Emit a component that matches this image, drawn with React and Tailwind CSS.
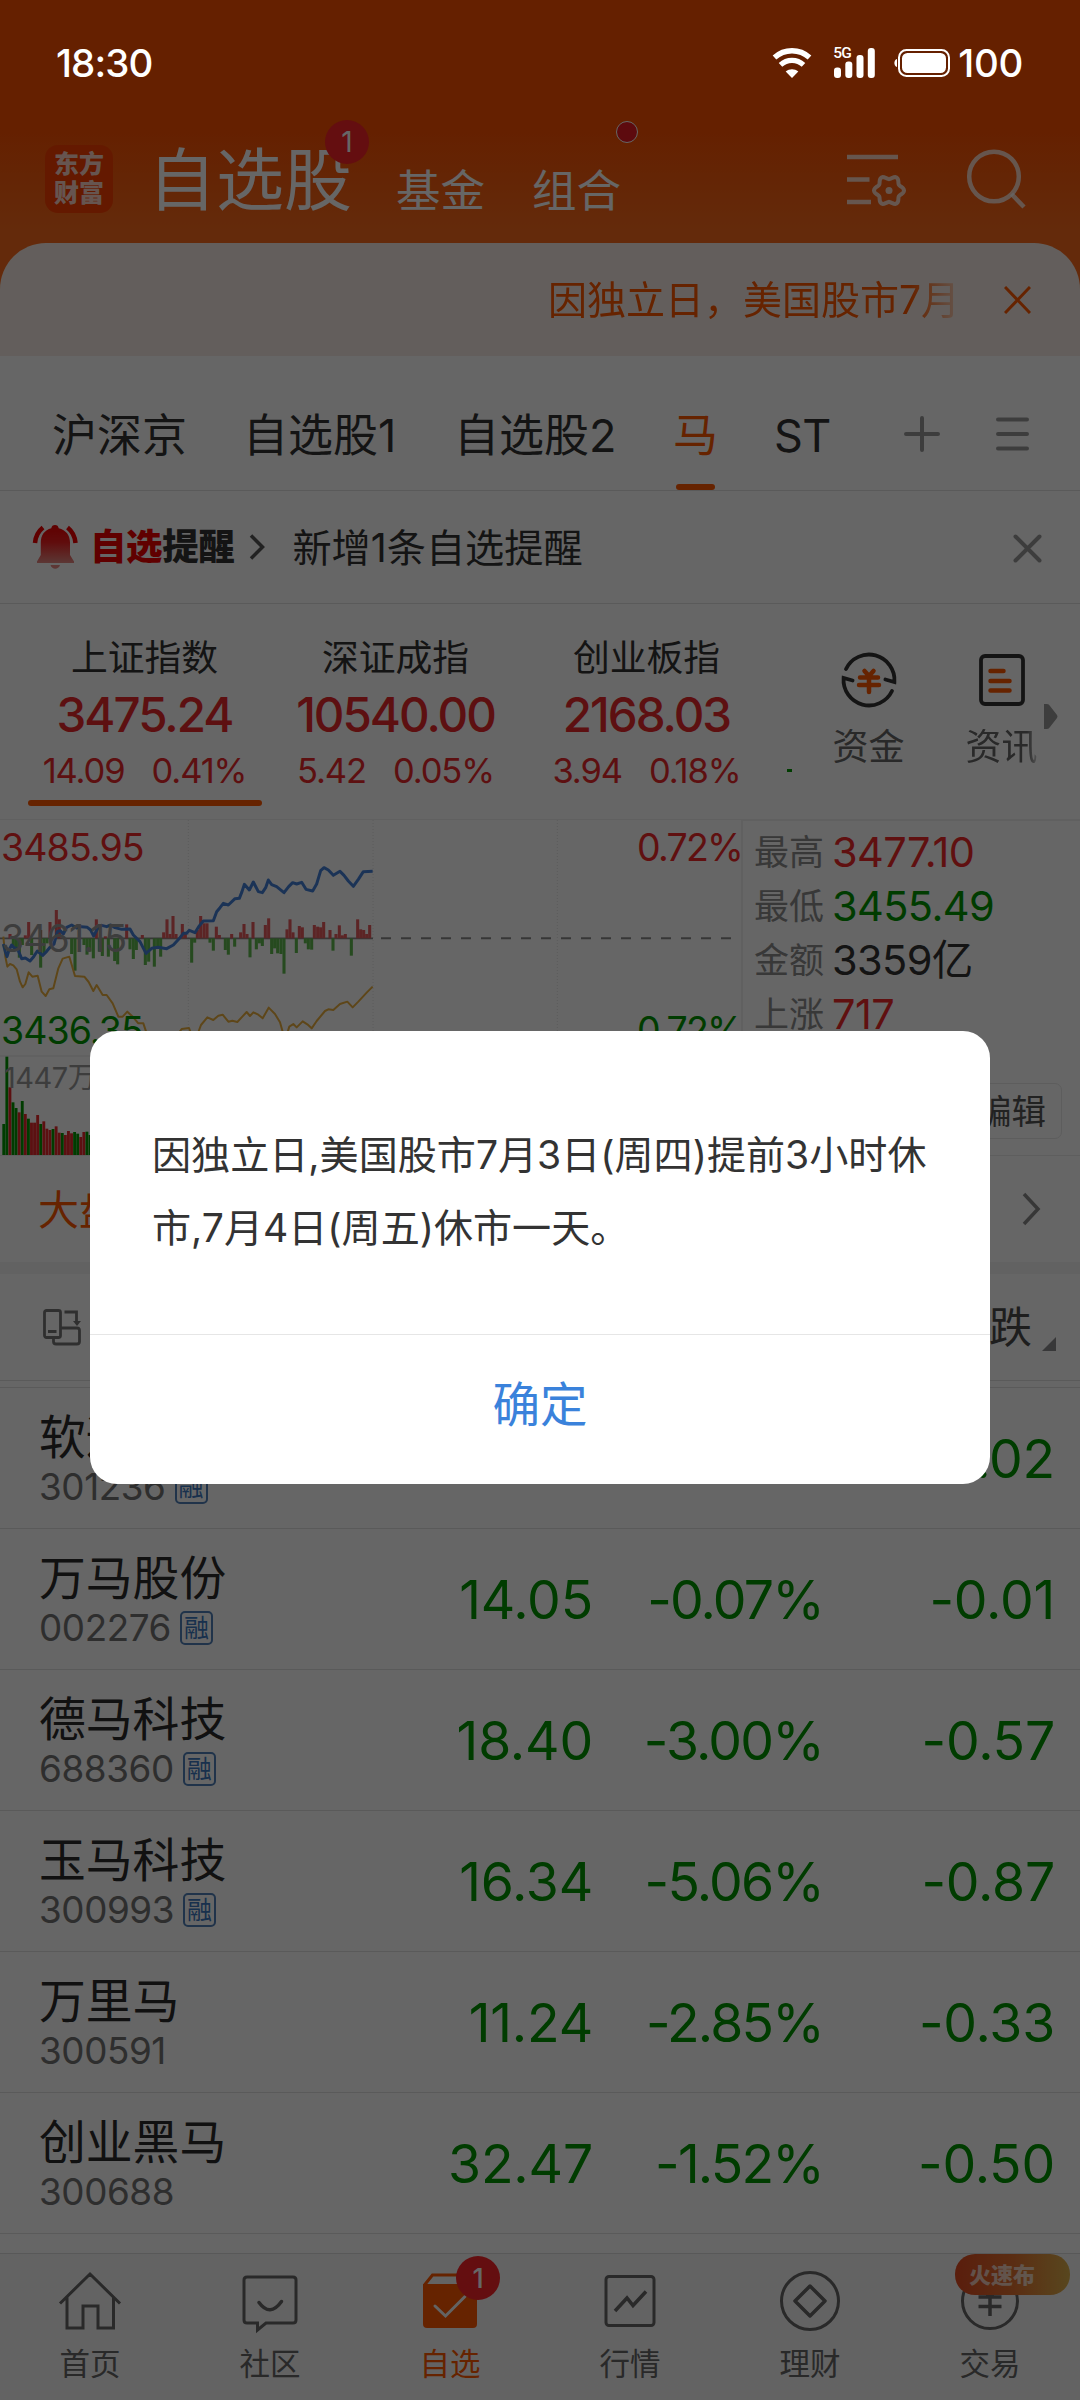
import React from "react";

const stocks = [
  { name: "软通动力", code: "301236", margin: true, price: "54.59", pct: "-0.04%", diff: "-0.02" },
  { name: "万马股份", code: "002276", margin: true, price: "14.05", pct: "-0.07%", diff: "-0.01" },
  { name: "德马科技", code: "688360", margin: true, price: "18.40", pct: "-3.00%", diff: "-0.57" },
  { name: "玉马科技", code: "300993", margin: true, price: "16.34", pct: "-5.06%", diff: "-0.87" },
  { name: "万里马", code: "300591", margin: false, price: "11.24", pct: "-2.85%", diff: "-0.33" },
  { name: "创业黑马", code: "300688", margin: false, price: "32.47", pct: "-1.52%", diff: "-0.50" },
];

const indexes = [
  { name: "上证指数", value: "3475.24", diff: "14.09", pct: "0.41%", active: true },
  { name: "深证成指", value: "10540.00", diff: "5.42", pct: "0.05%" },
  { name: "创业板指", value: "2168.03", diff: "3.94", pct: "0.18%" },
];

const stats = [
  { label: "最高", value: "3477.10", color: "text-[#f02a2a]" },
  { label: "最低", value: "3455.49", color: "text-[#009600]" },
  { label: "金额", value: "3359亿", color: "text-[#333333]" },
  { label: "上涨", value: "717", color: "text-[#f02a2a]" },
];

// chart data, [x, y] in chart units (3 units = 1px), zero line at y = 385
const priceLine =
  "10,402 16,425 21,440 27,420 35,405 44,415 52,415 65,446 76,444 90,453 101,440 112,423 128,436 140,424 150,412 162,402 172,365 181,362 190,372 200,352 215,345 230,354 244,350 262,352 272,360 281,378 295,352 305,346 320,350 332,345 345,353 365,358 390,357 400,375 420,395 438,430 455,415 475,412 500,416 520,405 540,383 550,370 560,370 568,361 585,368 596,350 610,333 640,332 650,305 660,293 670,280 685,285 705,266 718,265 726,245 733,223 748,240 760,216 775,245 787,248 797,233 805,210 815,224 830,230 840,238 852,248 866,230 878,218 890,222 905,217 918,238 938,243 950,222 962,182 972,173 985,180 1000,196 1020,184 1032,196 1045,213 1060,229 1075,208 1090,185 1118,184";
const avgLine =
  "10,380 16,440 22,470 30,462 40,466 50,478 60,515 68,532 76,522 86,487 97,500 113,497 125,545 137,558 148,538 160,535 175,475 188,446 208,440 225,498 253,500 266,516 280,543 290,525 308,555 320,555 338,580 355,620 368,620 382,605 400,622 415,640 430,640 440,670 470,700 520,690 545,657 567,654 577,680 590,680 603,645 622,622 640,630 655,617 668,614 685,635 697,632 712,636 727,620 740,606 750,618 760,607 775,614 788,625 806,593 825,612 840,637 855,690 868,650 880,642 890,652 908,634 922,643 935,655 950,633 975,603 985,598 1000,600 1020,582 1042,575 1058,592 1075,575 1100,548 1118,530";
const upBars = [
  [30, 372], [76, 376], [86, 336], [122, 360], [150, 336], [169, 300], [178, 328], [289, 328], [316, 379], [380, 343],
  [427, 375], [491, 367], [501, 328], [510, 372], [519, 318], [528, 372], [547, 342], [556, 372], [592, 360], [602, 318], [612, 340],
  [621, 340], [649, 350], [658, 375], [695, 372], [722, 367], [732, 342], [741, 372], [759, 336], [796, 345],
  [806, 325], [861, 358], [870, 328], [879, 367], [898, 348], [907, 352], [943, 345], [953, 350], [962, 352],
  [971, 336], [990, 360], [1008, 372], [1018, 346], [1027, 376], [1036, 372], [1073, 328], [1082, 358], [1091, 360], [1100, 372], [1109, 345],
];
const downBars = [
  [40, 415], [49, 420], [58, 443], [67, 405], [95, 435], [122, 473], [132, 430], [141, 400], [215, 432], [225, 482], [252, 405],
  [261, 434], [270, 425], [280, 445], [298, 425], [307, 438], [325, 440], [344, 453], [353, 463], [390, 418], [400, 447],
  [409, 420], [436, 465], [446, 455], [463, 470], [473, 415], [482, 440], [575, 458], [584, 398], [630, 398], [640, 422], [676, 420],
  [685, 434], [704, 410], [750, 442], [769, 418], [778, 400], [787, 408], [815, 432], [824, 415], [833, 430],
  [843, 432], [852, 491], [889, 429], [916, 400], [925, 418], [935, 419], [999, 422], [1054, 437],
];
const volumes = [
  ["g", 942], ["g", 740], ["r", 832], ["g", 877], ["g", 894], ["r", 907], ["g", 873], ["r", 912], ["g", 926], ["r", 938],
  ["r", 938], ["r", 915], ["g", 942], ["r", 934], ["r", 956], ["r", 960], ["g", 957], ["r", 949], ["r", 968], ["g", 969],
  ["r", 975], ["r", 963], ["r", 970], ["g", 966], ["g", 971], ["r", 981], ["r", 966], ["g", 965], ["g", 975], ["r", 970],
];

function gearPath(cx, cy, r, amp) {
  let d = "";
  for (let i = 0; i <= 72; i++) {
    const a = (i / 72) * Math.PI * 2;
    const rr = r + amp * Math.cos(6 * a);
    d += `${i ? "L" : "M"}${(cx + rr * Math.cos(a)).toFixed(2)} ${(cy + rr * Math.sin(a)).toFixed(2)}`;
  }
  return d + "Z";
}

function StatusBar() {
  return (
    <div className="relative z-20 h-[126px] flex items-center justify-between pl-[56px] pr-[57px] text-white font-medium text-[38.5px] leading-none">
      <span className="tracking-[-0.9px]">18:30</span>
      <div className="flex items-center">
        <svg width="40" height="32" viewBox="0 0 40 32" fill="none" stroke="#fff">
          <path d="M2.500 10.500C12.500 1.500 27.500 1.500 37.500 10.500" strokeWidth="5.500" />
          <path d="M8.500 17.800C15 11.800 25 11.800 31.500 17.800" strokeWidth="5.200" />
          <path d="M20 31l-6.300-6.500c3.800-3 8.800-3 12.600 0z" fill="#fff" stroke="none" />
        </svg>
        <div className="relative ml-[22px] w-[42px] h-[32px]">
          <span className="absolute left-[-1px] top-0 text-[15.5px] leading-[13px] font-medium tracking-[-0.8px] font-['Roboto']">5G</span>
          <svg width="42" height="32" viewBox="0 0 42 32" fill="#fff">
            <rect x="0" y="20.500" width="7" height="10.500" rx="3" />
            <rect x="11.300" y="14.500" width="7" height="16.500" rx="3" />
            <rect x="22.500" y="8" width="7" height="23" rx="3" />
            <rect x="33.800" y="1" width="7" height="30" rx="3" />
          </svg>
        </div>
        <svg className="ml-[18px]" width="56" height="30" viewBox="0 0 56 30" fill="none">
          <rect x="5" y="2" width="50" height="26" rx="7.500" stroke="#fff" strokeWidth="2" />
          <rect x="8" y="5" width="44" height="20" rx="5.500" fill="#fff" />
          <path d="M3 11v8C-.5 18-.5 12 3 11z" fill="#fff" />
        </svg>
        <span className="ml-[8px] tracking-[-0.3px]">100</span>
      </div>
    </div>
  );
}

function Header() {
  return (
    <div className="flex h-[117px] pl-[45px] text-white">
      <div className="mt-[19px] w-[68px] h-[68px] rounded-[13px] bg-[#fb4000] flex flex-col items-center justify-center text-[25px] leading-[29px] font-black text-[#ffffffcc]">
        <span>东方</span>
        <span>财富</span>
      </div>
      <div className="relative ml-[35px] mt-[20px] text-[68px] leading-[68px]">
        自选股
        <span className="absolute left-[177px] top-[-26px] w-[44px] h-[44px] rounded-full bg-[#fa2328] flex items-center justify-center text-[28px] leading-none">1</span>
      </div>
      <div className="ml-[44px] mt-[42px] text-[44.5px] leading-[46px]">基金</div>
      <div className="relative ml-[47px] mt-[42px] text-[44.5px] leading-[46px]">
        组合
        <span className="absolute left-[84px] top-[-47px] w-[22px] h-[22px] rounded-full border border-white bg-[#e81b23]" />
      </div>
      <svg className="ml-[226px] mt-[26px]" width="60" height="56" viewBox="0 0 60 56" fill="none" stroke="#ffffffc0" strokeWidth="4.500">
        <path d="M0 5h51M0 27.500h22.500M0 50h24" />
        <path d={gearPath(42, 38.5, 13.2, 1.8)} strokeWidth="4" />
        <circle cx="42" cy="38.500" r="3.500" fill="#ffffffc0" stroke="none" />
      </svg>
      <svg className="ml-[58px] mt-[22px]" width="62" height="62" viewBox="0 0 62 62" fill="none" stroke="#ffffffc0" strokeWidth="4.500">
        <circle cx="29" cy="28.500" r="24.800" />
        <path d="M46.500 46L59 59" />
      </svg>
    </div>
  );
}

function Banner() {
  return (
    <div className="h-[113px] rounded-t-[46px] bg-[#f8ece5] flex items-center text-[#fe5800]">
      <div className="ml-[548px] w-[412px] overflow-hidden whitespace-nowrap text-[39px] leading-[60px] [mask-image:linear-gradient(to_right,black_88%,transparent_102%)]">
        因独立日，美国股市7月
      </div>
      <svg className="ml-[44px]" width="27" height="28" viewBox="0 0 27 28" fill="none" stroke="currentColor" strokeWidth="3">
        <path d="M1 1l25 26M26 1L1 27" />
      </svg>
    </div>
  );
}

function Tabs() {
  return (
    <div className="h-[135px] border-b-[1px] border-[#e2e2e2] flex items-center pl-[52px] text-[45px] leading-[60px] text-[#333333] whitespace-nowrap">
      <span className="w-[191px] mt-[26px]">沪深京</span>
      <span className="w-[211px] mt-[26px]">自选股1</span>
      <span className="w-[219px] mt-[26px]">自选股2</span>
      <div className="relative w-[101px] text-[#fe5800] mt-[26px]">
        马
        <span className="absolute left-[3px] top-[78px] w-[39px] h-[6px] rounded-[3px] bg-[#fe5800]" />
      </div>
      <span className="w-[130px] mt-[26px] tracking-[-0.5px]">ST</span>
      <svg className="mt-[22px]" width="36" height="36" viewBox="0 0 36 36" stroke="#9a9a9a" strokeWidth="4" strokeLinecap="round">
        <path d="M18 2v32M2 18h32" />
      </svg>
      <svg className="mt-[22px] ml-[55px]" width="34" height="36" viewBox="0 0 34 36" stroke="#9a9a9a" strokeWidth="4" strokeLinecap="round">
        <path d="M3 3.500h29M3 18h29M3 32.500h29" />
      </svg>
    </div>
  );
}

function AlertRow() {
  return (
    <div className="h-[113px] border-b-[1px] border-[#e2e2e2] flex items-center pl-[32px] text-[#333333]">
      <svg width="46" height="46" viewBox="0 0 46 46">
        <defs>
          <linearGradient id="bell" x1="0" y1="0" x2="0" y2="1">
            <stop offset="0" stopColor="#f00000" />
            <stop offset="0.45" stopColor="#f02020" />
            <stop offset="1" stopColor="#e58a84" />
          </linearGradient>
        </defs>
        <path fill="url(#bell)" d="M23 1c-2 0-3.500 1.200-3.700 3.300C12.500 6 8.800 11.500 8.800 18.500V31L5 37.500V39h37v-1.500L38 31V18.500c0-7-4-12.500-11.300-14.200C26.500 2.200 25 1 23 1z" />
        <path fill="#e98a86" d="M18.500 41h9.500c-1.500 5-8 5-9.500 0z" />
        <path fill="none" stroke="#f00000" strokeWidth="4.500" d="M11 3.500C6 7.500 3.500 12.500 3 19M35.500 3.500C40.500 7.500 43 12.500 43.500 19" />
      </svg>
      <div className="ml-[12px] text-[36.500px] leading-[50px] font-black tracking-[-0.4px]">
        <span className="text-[#f00000]">自选</span>提醒
      </div>
      <svg className="ml-[15px]" width="16" height="26" viewBox="0 0 16 26" fill="none" stroke="#555" strokeWidth="3.500">
        <path d="M2 1.500l11.500 11.500L2 24.500" />
      </svg>
      <div className="ml-[27px] mt-[2px] text-[39.200px] leading-[50px]">新增1条自选提醒</div>
      <svg className="ml-auto mr-[38px] mt-[2px]" width="29" height="29" viewBox="0 0 29 29" stroke="#9a9a9a" strokeWidth="4" strokeLinecap="round">
        <path d="M2.500 2.500l24 24M26.500 2.500l-24 24" />
      </svg>
    </div>
  );
}

function IndexRow() {
  return (
    <div className="h-[215px] flex pl-[19px] overflow-hidden">
      {indexes.map((it) => (
        <div key={it.name} className="w-[251px] flex flex-col items-center whitespace-nowrap">
          <div className="mt-[32px] text-[36.800px] leading-[44px] text-[#333333]">{it.name}</div>
          <div className="mt-[9px] text-[47.500px] leading-[52px] font-medium tracking-[-2px] text-[#e82a2c]">{it.value}</div>
          <div className="mt-[10px] flex gap-[27px] text-[34.500px] leading-[40px] tracking-[-1.1px] text-[#e82a2c]">
            <span>{it.diff}</span>
            <span>{it.pct}</span>
          </div>
          {it.active && <div className="mt-[9px] w-[234px] h-[6px] rounded-[3px] bg-[#fe5800]" />}
        </div>
      ))}
      <div className="mt-[165px] ml-[15px] w-[5px] h-[3px] bg-[#009600]" />
      <div className="relative ml-[10px] flex text-[36px] text-[#666666]">
        <div className="w-[133px] flex flex-col items-center">
          <svg className="mt-[47px]" width="58" height="58" viewBox="0 0 58 58" fill="none" stroke="#333" strokeWidth="3.800" strokeLinecap="round">
            <path d="M6 18A25.500 25.500 0 0 1 54.400 31l-9-2.500" />
            <path d="M52 40A25.500 25.500 0 0 1 3.600 27l9 2.500" />
            <path d="M24.500 20l4.500 5 4.500-5M20 26.500h18M19 34h20M29 26v15" stroke="#fe5800" strokeWidth="4.500" />
          </svg>
          <div className="mt-[14px] leading-[48px]">资金</div>
        </div>
        <div className="w-[133px] flex flex-col items-center">
          <svg className="mt-[49px]" width="46" height="54" viewBox="0 0 46 54" fill="none" stroke="#333" strokeWidth="3.800" strokeLinecap="round">
            <rect x="2" y="3" width="42" height="48" rx="4" />
            <path d="M11.500 18h13M11.500 28h19M11.500 37.500h19" stroke="#fe5800" strokeWidth="4.500" />
          </svg>
          <div className="mt-[16px] leading-[48px] [mask-image:linear-gradient(to_right,black_85%,transparent_105%)]">资讯</div>
        </div>
        <svg className="absolute left-[242px] top-[100px]" width="14" height="25" viewBox="0 0 14 25" fill="#999">
          <path d="M0 0h3q2 0 3 2l7 9q1 1.500 0 3l-7 9q-1 2-3 2H0z" />
        </svg>
      </div>
    </div>
  );
}

function Chart() {
  return (
    <div className="relative w-[743px] h-[337px] border-r-[2px] border-[#f0f0f0]">
      <svg className="block" width="741" height="337" viewBox="0 27 2223 1011" fill="none">
        <path d="M0 27.500H2223M0 738H2223" stroke="#f0f0f0" strokeWidth="5" />
        <path d="M565 30V738M1119 30V738M1672 30V738" stroke="#e4e4e4" strokeWidth="3" strokeDasharray="3 6" />
        <path d="M0 385H1119" stroke="#8a8a8a" strokeWidth="5" />
        <path d="M1143 385H2223" stroke="#8a8a8a" strokeWidth="6" strokeDasharray="30 30" />
        {upBars.map(([x, y]) => (
          <rect key={x} x={x - 4.6} y={y} width="9.200" height={385 - y} fill="#e65a5c" />
        ))}
        {downBars.map(([x, y]) => (
          <rect key={x} x={x - 4.6} y="385" width="9.200" height={y - 385} fill="#5fb84e" />
        ))}
        <polyline points={avgLine} stroke="#eab040" strokeWidth="6" strokeLinejoin="round" />
        <polyline points={priceLine} stroke="#4580d8" strokeWidth="9" strokeLinejoin="round" />
        {volumes.map(([c, y], i) => (
          <rect key={i} x={7 + i * 9.24} y={y} width="8.600" height={1035 - y} fill={c === "r" ? "#e62a2c" : "#009600"} />
        ))}
      </svg>
      <div className="absolute inset-0 text-[37.500px] leading-[40px] tracking-[-0.9px]">
        <span className="absolute left-[1px] top-[9px] text-[#f02a2a]">3485.95</span>
        <span className="absolute left-[1px] top-[100px] text-[#999999]">3461.15</span>
        <span className="absolute left-[1px] top-[192px] text-[#009600]">3436.35</span>
        <span className="absolute right-[-1px] top-[9px] text-[#f02a2a] tracking-[-1.8px]">0.72%</span>
        <span className="absolute right-[-1px] top-[192px] text-[#009600] tracking-[-1.8px]">-0.72%</span>
        <span className="absolute left-[4px] top-[239px] text-[29px] text-[#999999] tracking-[-0.5px]">1447万</span>
      </div>
    </div>
  );
}

function Market() {
  return (
    <div className="flex h-[337px] border-b-[1px] border-[#ececec]">
      <Chart />
      <div className="flex-1 border-t-[2px] border-[#f0f0f0] pl-[11px] pt-[4px]">
        <div className="h-[241px]">
          {stats.map((s) => (
            <div key={s.label} className="h-[54px] flex items-center leading-[54px]">
              <span className="w-[78px] text-[35px] text-[#8c8c8c]">{s.label}</span>
              <span className={`text-[41.500px] tracking-[-0.6px] ${s.color}`}>{s.value}</span>
            </div>
          ))}
        </div>
        <div className="ml-auto mr-[18px] mt-[17px] w-[120px] h-[56px] rounded-[7px] border-[1.500px] border-[#e8e8e8] flex items-center justify-end pr-[15px] pt-[2px] text-[34.500px] text-[#555555]">
          编辑
        </div>
      </div>
    </div>
  );
}

function StockList() {
  return (
    <div>
      <div className="h-[107px] flex items-center justify-between pl-[38px] pr-[39px] text-[41px] text-[#fe5800] border-b-[1px] border-[#f4f4f4]">
        <span className="mt-[3px]">大盘</span>
        <svg width="20" height="34" viewBox="0 0 20 34" fill="none" stroke="#8a8a8a" strokeWidth="3.500">
          <path d="M3 2l14 15L3 32" />
        </svg>
      </div>
      <div className="h-[11px] bg-[#f4f4f4]" />
      <div className="h-[107px] flex items-center pl-[42px] pr-[24px] border-b-[1px] border-[#e2e2e2]">
        <svg width="40" height="38" viewBox="0 0 40 38" fill="none" stroke="#777" strokeWidth="2.800">
          <rect x="2.500" y="2.500" width="16" height="27" rx="2" />
          <path d="M6 23.500h8.500M18.500 20H35q2.500 0 2.500 2.500v11q0 2.500-2.500 2.500H14q-2.500 0-2.500-2.500V30M22.500 4H34.500v11" />
          <path d="M31 13h8l-4 5z" fill="#777" stroke="none" />
        </svg>
        <span className="ml-auto text-[43px] leading-[60px] text-[#4c4c4c]">涨跌</span>
        <svg className="ml-[10px] mt-[34px]" width="14" height="14" viewBox="0 0 14 14" fill="#8c8c90">
          <path d="M14 0v14H0z" />
        </svg>
      </div>
      <div className="h-[7px] border-b-[1px] border-[#e2e2e2]" />
      {stocks.map((s) => (
        <div key={s.code} className="h-[141px] border-b-[1px] border-[#e2e2e2] flex pl-[39px] pr-[25px]">
          <div className="w-[252px] pt-[22px]">
            <div className="text-[46.800px] leading-[54px] text-[#2b2b2b]">{s.name}</div>
            <div className="mt-[4px] flex items-center text-[36.800px] leading-[38px] text-[#737373]">
              <span className="tracking-[-0.4px]">{s.code}</span>
              {s.margin && (
                <span className="ml-[9px] w-[33px] h-[34px] rounded-[5px] border-2 border-[#5080b8] text-[#3c78c0] text-[25px] flex items-center justify-center leading-none">融</span>
              )}
            </div>
          </div>
          <div className="flex-1 flex items-center pt-[3px] text-[53.500px] text-[#009600] tracking-[-0.2px]">
            <span className="w-[302px] text-right">{s.price}</span>
            <span className="w-[230px] text-right tracking-[-1.8px]">{s.pct}</span>
            <span className="flex-1 text-right">{s.diff}</span>
          </div>
        </div>
      ))}
    </div>
  );
}

function NavItem({ label, active, children }) {
  return (
    <div className={active ? "relative w-[180px] flex flex-col items-center text-[#fe5800]" : "relative w-[180px] flex flex-col items-center text-[#666666]"}>
      <svg className="mt-[15px]" width="66" height="66" viewBox="0 0 66 66" fill="none" stroke="currentColor" strokeWidth="3">
        {children}
      </svg>
      <span className="mt-[8px] text-[30.500px] leading-[42px]">{label}</span>
      {active && (
        <span className="absolute left-[96px] top-[2px] w-[44px] h-[44px] rounded-full bg-[#fa2328] text-white text-[27px] font-medium flex items-center justify-center leading-none">1</span>
      )}
    </div>
  );
}

function BottomNav() {
  return (
    <div className="relative h-[147px] bg-[#f8f8f8] border-t-[1px] border-[#dcdcdc] flex">
      <NavItem label="首页">
        <path d="M3 34.500L33 5l30 29.500M10 28v31h16V37h15v22h15.500V28" />
      </NavItem>
      <NavItem label="社区">
        <path d="M10 8h46q3 0 3 3v40q0 3-3 3H29l-8.500 7V54H10q-3 0-3-3V11q0-3 3-3z" />
        <path d="M22 33.500q11 15 22.500-1" strokeWidth="3.500" strokeLinecap="round" />
      </NavItem>
      <NavItem label="自选" active>
        <path d="M7.500 16L15.500 6H51l8 10" />
        <path d="M6 15h54v40q0 4-4 4H10q-4 0-4-4z" fill="currentColor" stroke="none" />
        <path d="M18 37l10.500 10L48 27.500" stroke="#f8f8f8" strokeWidth="3" strokeLinecap="round" />
      </NavItem>
      <NavItem label="行情">
        <rect x="9" y="7.500" width="48" height="49" rx="3" />
        <path d="M18 42l12-13 6 7.500 13-14" strokeWidth="3.500" />
      </NavItem>
      <NavItem label="理财">
        <circle cx="33" cy="32" r="28.500" />
        <path d="M33 17l15 15-15 15-15-15z" strokeLinejoin="round" strokeWidth="3.500" />
      </NavItem>
      <NavItem label="交易">
        <circle cx="33" cy="32" r="27.500" />
        <path d="M22 16l11 12 11-12M21.500 28h23M21.500 37.500h23M33 28v19" strokeWidth="3.500" />
      </NavItem>
      <span className="absolute left-[955px] top-0 w-[115px] h-[41px] rounded-[20px] bg-linear-to-r from-[#e04a20] via-[#e07030] to-[#dcb04c] pl-[14px] text-[22px] leading-[42px] font-black text-[#ffffffb0]">
        火速布
      </span>
    </div>
  );
}

function Dialog() {
  return (
    <div className="absolute inset-0 z-10 bg-black/60">
      <div className="mt-[1031px] mx-auto w-[900px] h-[453px] rounded-[27px] bg-white flex flex-col">
        <p className="h-[303px] pl-[62px] pt-[87px] text-[39.100px] leading-[73px] text-[#333333] whitespace-nowrap">
          因独立日,美国股市7月3日(周四)提前3小时休
          <br />
          市,7月4日(周五)休市一天。
        </p>
        <button className="flex-1 border-t-[1px] border-[#e6e6e6] pb-[10px] text-[47.500px] text-[#3a82db]">确定</button>
      </div>
    </div>
  );
}

export default function App() {
  return (
    <div className="relative w-[1080px] h-[2400px] overflow-hidden bg-white font-['Inter','Noto_Sans_CJK_SC',sans-serif] flex flex-col">
      <div className="bg-[linear-gradient(to_bottom,#fc5000_0px,#fc5000_126px,#fa6a1c_230px,#fa6a1c_300px)]">
        <StatusBar />
        <Header />
        <Banner />
      </div>
      <Tabs />
      <AlertRow />
      <IndexRow />
      <Market />
      <StockList />
      <div className="flex-1" />
      <BottomNav />
      <Dialog />
    </div>
  );
}
